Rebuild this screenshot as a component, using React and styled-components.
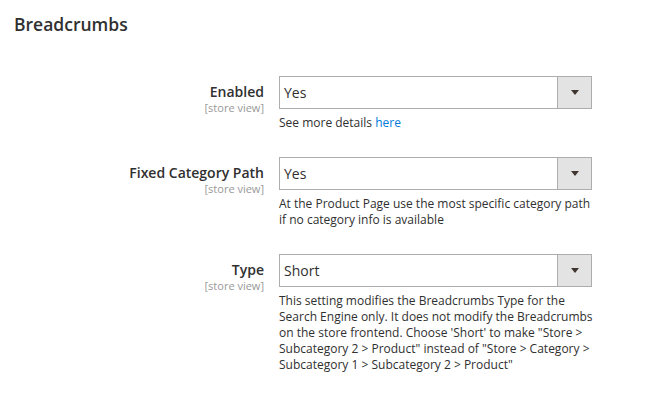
import React from "react";
import styled, { createGlobalStyle } from "styled-components";

const GlobalStyle = createGlobalStyle`
body {
  margin: 0;
  background: #ffffff;
  font-family: "Open Sans", "Liberation Sans", sans-serif;
  color: #303030;
}
`

const Section = styled.section`
padding: 12px 14px 0px 14px;
`

const Title = styled.h2`
margin: 0px;
font-size: 17.5px;
font-weight: 600;
line-height: 24px;
color: #303030;
`

const Fields = styled.div`
margin-top: 40px;
display: grid;
grid-template-columns: 250px 313px;
column-gap: 15px;
row-gap: 26px;
`

const Label = styled.div`
text-align: right;
padding-top: 7px;
`

const LabelText = styled.div`
font-size: 14px;
font-weight: 600;
line-height: 18px;
color: #303030;
`

const Scope = styled.div`
font-size: 11px;
line-height: 13px;
color: #999999;
`

const Control = styled.div`
display: flex;
flex-direction: column;
`

const Select = styled.div`
display: flex;
height: 33px;
box-sizing: border-box;
border: 1px solid #adadad;
background: #ffffff;
`

const Value = styled.div`
flex: 1;
padding: 0px 4px;
font-size: 14px;
line-height: 31px;
color: #303030;
`

const Toggle = styled.div`
width: 33px;
display: flex;
align-items: center;
justify-content: center;
background: #e3e3e3;
border-left: 1px solid #adadad;
&::after{
    content: "";
    border-left: 4px solid transparent;
    border-right: 4px solid transparent;
    border-top: 5px solid #41362f;
}
`

const Note = styled.div`
margin-top: 6px;
margin-right: -8px;
font-size: 12px;
line-height: 16px;
color: #303030;
`

const Link = styled.a`
color: #007bdb;
text-decoration: none;
`

const fields = [
    { label: "Enabled", value: "Yes", note: <>See more details <Link href="#">here</Link></> },
    { label: "Fixed Category Path", value: "Yes", note: "At the Product Page use the most specific category path if no category info is available" },
    { label: "Type", value: "Short", note: "This setting modifies the Breadcrumbs Type for the Search Engine only. It does not modify the Breadcrumbs on the store frontend. Choose 'Short' to make \"Store > Subcategory 2 > Product\" instead of \"Store > Category > Subcategory 1 > Subcategory 2 > Product\"" },
]

function App(){
    return(
        <>
        <GlobalStyle/>
        <Section>
            <Title>Breadcrumbs</Title>
            <Fields>
                {fields.map((f)=>(
                    <React.Fragment key={f.label}>
                        <Label>
                            <LabelText>{f.label}</LabelText>
                            <Scope>[store view]</Scope>
                        </Label>
                        <Control>
                            <Select>
                                <Value>{f.value}</Value>
                                <Toggle/>
                            </Select>
                            <Note>{f.note}</Note>
                        </Control>
                    </React.Fragment>
                ))}
            </Fields>
        </Section>
        </>
    )
}

export default App;
